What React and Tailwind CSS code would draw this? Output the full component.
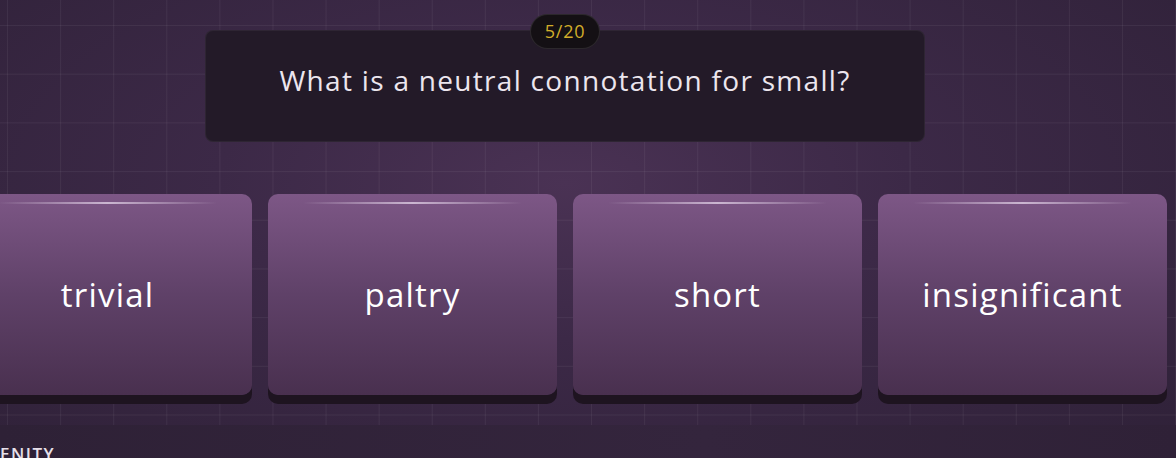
import React from 'react';

const answers = ['trivial', 'paltry', 'short', 'insignificant'];

function AnswerCard({ label }) {
  return (
    <button className="relative flex h-[201px] w-[289px] shrink-0 items-center justify-center rounded-[10px] bg-[linear-gradient(180deg,#7d5786_0%,#5f4168_50%,#49304f_100%)] shadow-[0_9px_0_#1e1420]">
      <span className="absolute left-[12%] right-[12%] top-[8px] h-[2px] rounded-full bg-[linear-gradient(90deg,rgba(255,255,255,0)_0%,rgba(230,215,235,0.75)_50%,rgba(255,255,255,0)_100%)]" />
      <span className="text-[33px] leading-none tracking-[1.2px] text-white">{label}</span>
    </button>
  );
}

export default function App() {
  const current = 5;
  const total = 20;

  return (
    <div className="h-[458px] w-[1176px] overflow-hidden bg-[radial-gradient(ellipse_at_48%_40%,#4a3254_0%,#3c2947_40%,#2f2138_100%)] font-['Open_Sans','Noto_Sans',sans-serif]">
      <div className="h-[425px] w-full bg-[linear-gradient(90deg,rgba(255,255,255,0.055)_1px,transparent_1px),linear-gradient(180deg,rgba(255,255,255,0.055)_1px,transparent_1px)] bg-[size:53.1px_48.7px] bg-[position:7px_25px]">
        <div className="flex w-[1130px] flex-col items-center">
          <div className="relative mt-[30px] flex h-[112px] w-[720px] items-center justify-center rounded-lg border border-white/5 bg-[#231a28] pb-[12px]">
            <div className="absolute -top-[17px] left-1/2 flex h-[35px] w-[70px] -translate-x-1/2 items-center justify-center rounded-full border border-white/10 bg-[#141014] text-[18px] tracking-[0.8px] text-[#d2ad2a]">
              {current}/{total}
            </div>
            <h2 className="text-[28px] tracking-[1.3px] text-[#ece6ee]">
              What is a neutral connotation for small?
            </h2>
          </div>

          <div className="mt-[52px] flex w-full justify-center gap-[16px]">
            {answers.map((a) => (
              <AnswerCard key={a} label={a} />
            ))}
          </div>
        </div>
      </div>

      <div className="h-[33px] bg-[linear-gradient(90deg,#2e2136_0%,#34253d_60%,#2f2137_100%)] pt-[20px]">
        <span className="block text-[17px] font-semibold leading-none tracking-[1.5px] text-[#e7e0ea]">ENITY</span>
      </div>
    </div>
  );
}
